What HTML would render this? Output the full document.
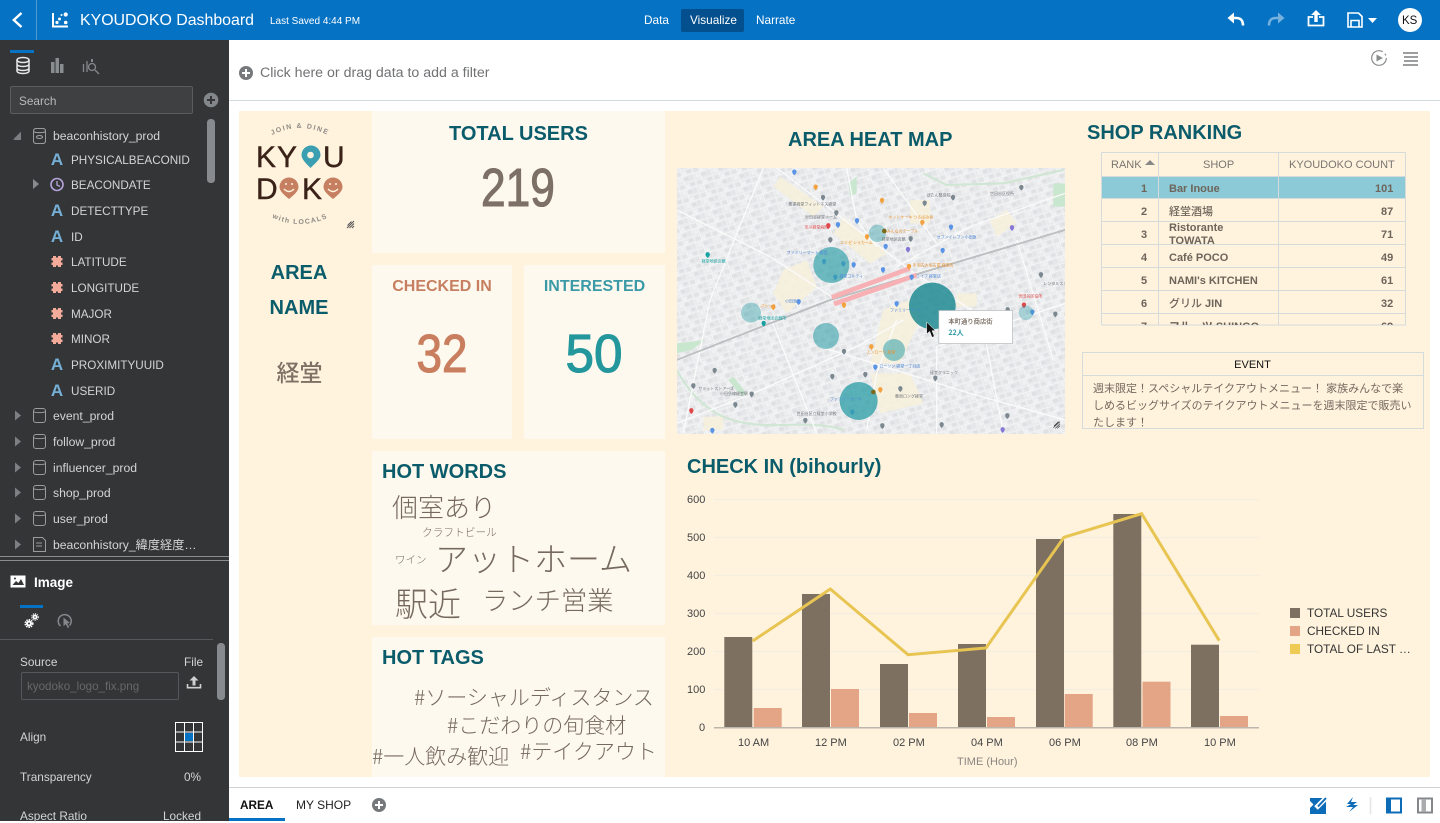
<!DOCTYPE html>
<html lang="ja"><head><meta charset="utf-8"><title>KYOUDOKO Dashboard</title>
<style>
html,body{margin:0;padding:0;width:1440px;height:821px;overflow:hidden;background:#fff;font-family:"Liberation Sans","Noto Sans CJK JP",sans-serif}
.a{position:absolute;white-space:nowrap;line-height:0}
.b{position:absolute}
svg{position:absolute;overflow:visible}
.h{color:#0b5c6b;font-weight:700}
.tree{color:#d3d4d5;font-size:12.200px}
.cap{font-size:11.700px;margin-top:1px}
.lab{color:#d3d4d5;font-size:11.800px;margin-top:.5px}
.w{color:#766a5f;font-family:"Noto Sans CJK JP",sans-serif;font-weight:300}
.p{background:#fef9ef}
.td{color:#6d645a;font-size:11px;font-weight:700;margin-top:.5px}
.jp{font-weight:500}
.th{color:#7a7570;font-size:11px}
.ax{color:#444;font-size:11px}
.leg{color:#333;font-size:11.800px}
.nav{color:#fff;font-size:11.800px;top:20px}
</style></head><body>

<!-- top bar -->
<div class="b" style="left:0;top:0;width:1440px;height:40px;background:#0572c4"></div>
<div class="b" style="left:36px;top:0;width:1px;height:40px;background:#4b9ad6"></div>
<svg style="left:0;top:0" width="1440" height="40" fill="none">
<path d="M21.500 13L13.800 20L21.500 27" stroke="#fff" stroke-width="2.400"/>
<path d="M53 13V26.500H68" stroke="#fff" stroke-width="2"/>
<circle cx="57" cy="22.500" r="1.600" fill="#fff"/><circle cx="59.500" cy="19" r="1.500" fill="#fff"/><circle cx="65.700" cy="14.500" r="2.100" fill="#fff"/><circle cx="65.700" cy="22.500" r="1.800" fill="#fff"/><circle cx="61.500" cy="15" r="1" fill="#fff"/>
<path d="M1233 18h3.500c4 0 6.500 2.500 6.500 7.500" stroke="#fff" stroke-width="2.600"/>
<path d="M1234 12.500l-6.500 5.500 6.500 5.500z" fill="#fff"/>
<g opacity=".45"><path d="M1279 18h-3.500c-4 0-6.500 2.500-6.500 7.500" stroke="#fff" stroke-width="2.600"/><path d="M1278 12.500l6.500 5.500-6.500 5.500z" fill="#fff"/></g>
<path d="M1313 17h-4.500v8.500h15V17H1319" stroke="#fff" stroke-width="1.800"/>
<path d="M1316 10l-5 5h3.300v7h3.400v-7h3.300z" fill="#fff"/>
<path d="M1348 13h10.500l3.500 3.500V27h-14z" stroke="#fff" stroke-width="1.600"/><path d="M1351 27v-6.500h8V27" stroke="#fff" stroke-width="1.600"/>
<path d="M1368 18h9l-4.500 5z" fill="#fff"/>
<circle cx="1410" cy="20" r="12" fill="#fff"/>
</svg>
<div class="a" style="left:80px;top:20.500px;color:#fff;font-size:15.900px">KYOUDOKO Dashboard</div>
<div class="a" style="left:270px;top:21.500px;color:#fff;font-size:10px">Last Saved 4:44 PM</div>
<div class="a nav" style="left:644px">Data</div>
<div class="b" style="left:681px;top:9px;width:63px;height:23px;background:#04508e;border-radius:2px"></div>
<div class="a nav" style="left:690px">Visualize</div>
<div class="a nav" style="left:756px">Narrate</div>
<div class="a" style="left:1402px;top:20.500px;color:#111;font-size:11.500px">KS</div>

<!-- sidebar -->
<div class="b" style="left:0;top:40px;width:229px;height:781px;background:#333537"></div>
<div class="b" style="left:10px;top:50px;width:24px;height:3px;background:#0572c4"></div>
<svg style="left:0;top:40px" width="229" height="781" fill="none">
<defs><path id="hs" d="M-4 -6h3v1.500h2V-6h3v2h1.500v2.500H4v2h1.500V3H4v2h-3V3.500h-2V5h-3V3h-1.500V.5H-4v-2h-1.500V-4H-4z"/></defs>
<g stroke="#e8e8e8" stroke-width="1.500"><ellipse cx="23" cy="20" rx="6" ry="2.500"/><path d="M17 20v11c0 1.500 2.500 2.500 6 2.500s6-1 6-2.500V20M17 24c0 1.500 2.500 2.500 6 2.500s6-1 6-2.500M17 28c0 1.500 2.500 2.500 6 2.500s6-1 6-2.500"/></g>
<path d="M51 22h3.500v11H51zM55.500 18h3.500v15h-3.500zM60 24h3.500v9H60z" fill="#8a8d90"/>
<g stroke="#85888b" stroke-width="1.300"><path d="M83.500 24v8M87 21v11"/><circle cx="92" cy="27" r="3.500"/><path d="M95 30l4 4"/><path d="M92 19v3" stroke-width="2"/></g>
<rect x="10.500" y="46.500" width="182" height="27" rx="1.500" fill="#3e4042" stroke="#5a5c5e"/>
<circle cx="211" cy="60" r="7.300" fill="#84878a"/><path d="M207 60h8M211 56v8" stroke="#333537" stroke-width="2"/>
<rect x="207" y="79" width="8" height="64" rx="3.500" fill="#878b8f"/>
<path d="M13 99.500l8-8v8z" fill="#777a7d"/>
<g stroke="#9a9c9e" stroke-width="1"><rect x="33.500" y="88.500" width="12" height="15" rx="2.500"/><path d="M33.500 91.500c1 1.500 11 1.500 12 0"/><ellipse cx="39.500" cy="97" rx="3" ry="1.500"/></g>
<path d="M33 139l6 5-6 5z" fill="#888b8e"/>
<circle cx="57" cy="144.500" r="6" stroke="#b6a3dc" stroke-width="1.600"/><path d="M57 141v4l3 1.500" stroke="#b6a3dc" stroke-width="1.300"/>
<g fill="#7d8083"><path d="M15 370.500l6 5-6 5zM15 396.500l6 5-6 5zM15 422.500l6 5-6 5zM15 447.500l6 5-6 5zM15 473.500l6 5-6 5zM15 499.500l6 5-6 5z"/></g>
<g stroke="#9a9c9e" stroke-width="1"><rect x="33.500" y="368.500" width="12" height="14" rx="2.500"/><path d="M33.500 371.500c1 1.500 11 1.500 12 0"/><rect x="33.500" y="394.500" width="12" height="14" rx="2.500"/><path d="M33.500 397.500c1 1.500 11 1.500 12 0"/><rect x="33.500" y="420.500" width="12" height="14" rx="2.500"/><path d="M33.500 423.500c1 1.500 11 1.500 12 0"/><rect x="33.500" y="445.500" width="12" height="14" rx="2.500"/><path d="M33.500 448.500c1 1.500 11 1.500 12 0"/><rect x="33.500" y="471.500" width="12" height="14" rx="2.500"/><path d="M33.500 474.500c1 1.500 11 1.500 12 0"/><path d="M33.500 497.500h9l3 3v11h-12zM36 503h6M36 506h6"/></g>
<path d="M0 516.500h229M0 520.500h229" stroke="#8a8c8e"/>
<rect x="10.500" y="535.500" width="15" height="12" fill="#fff"/><path d="M12.500 545l3.500-4 2.500 2 2.500-4 3 6z" fill="#333537"/><circle cx="15" cy="538.500" r="1" fill="#333537"/>
<path d="M20 566.500h23" stroke="#0572c4" stroke-width="3"/>
<g fill="#fff"><circle cx="29" cy="583.500" r="3.800" stroke="#fff" stroke-width="1.500" stroke-dasharray="1.500 1" fill="none"/><circle cx="29" cy="583.500" r="3"/><circle cx="29" cy="583.500" r="1" fill="#333537"/><circle cx="35" cy="577" r="2.500"/><circle cx="35" cy="577" r="3.300" stroke="#fff" stroke-dasharray="1.200 1" fill="none"/><circle cx="35" cy="577" r=".8" fill="#333537"/></g>
<path d="M60.500 586a6.500 6.500 0 1 1 9-.5" stroke="#85888b" stroke-width="1.500"/><path d="M63.500 577.500l6.500 5.500-2.800.4 2 4-1.400.7-2-4-2.300 2z" fill="#85888b"/>
<path d="M0 599.500h213" stroke="#55575a"/>
<rect x="217" y="603" width="8" height="57" rx="3.500" fill="#878b8f"/>
<rect x="21.500" y="632.500" width="157" height="27" rx="1.500" stroke="#55575a"/>
<path d="M187.500 644v3.700h13V644" stroke="#d0d0d0" stroke-width="1.600"/><path d="M194 636l-4.500 4.500h3v5h3v-5h3z" fill="#d0d0d0"/>
<rect x="175.500" y="682.500" width="27" height="29" stroke="#fff"/><path d="M184.500 682.500v29M193.500 682.500v29M175.500 692h27M175.500 702h27" stroke="#fff"/><rect x="185" y="693" width="8" height="8" fill="#0572c4"/>
</svg>
<div class="a" style="left:19px;top:101px;color:#b9babb;font-size:11.800px">Search</div>
<div class="a tree" style="left:53px;top:135.500px">beaconhistory_prod</div>
<svg style="left:0;top:0" width="229" height="420" fill="none">
<path d="M14 140l7-7v7z" fill="#7d8083"/>
<g stroke="#9a9c9e" stroke-width="1"><rect x="33.500" y="128.500" width="12" height="15" rx="2.500"/><path d="M33.500 131.500c1 1.500 11 1.500 12 0"/><ellipse cx="39.500" cy="137" rx="3" ry="1.500"/></g>
<g font-family="Liberation Sans" font-weight="700" font-size="17" fill="#76b0d6" text-anchor="middle">
<text x="57" y="165">A</text><text x="57" y="216">A</text><text x="57" y="242">A</text><text x="57" y="370">A</text><text x="57" y="396">A</text></g>
<g fill="#f4ab9a"><use href="#hs" x="57" y="262"/><use href="#hs" x="57" y="288"/><use href="#hs" x="57" y="314"/><use href="#hs" x="57" y="339"/></g>
</svg>
<div class="a tree cap" style="left:71px;top:159.500px">PHYSICALBEACONID</div>
<div class="a tree cap" style="left:71px;top:185px">BEACONDATE</div>
<div class="a tree cap" style="left:71px;top:211px">DETECTTYPE</div>
<div class="a tree cap" style="left:71px;top:237px">ID</div>
<div class="a tree cap" style="left:71px;top:262px">LATITUDE</div>
<div class="a tree cap" style="left:71px;top:288px">LONGITUDE</div>
<div class="a tree cap" style="left:71px;top:314px">MAJOR</div>
<div class="a tree cap" style="left:71px;top:339px">MINOR</div>
<div class="a tree cap" style="left:71px;top:365px">PROXIMITYUUID</div>
<div class="a tree cap" style="left:71px;top:391px">USERID</div>
<div class="a tree" style="left:53px;top:416px">event_prod</div>
<div class="a tree" style="left:53px;top:442px">follow_prod</div>
<div class="a tree" style="left:53px;top:468px">influencer_prod</div>
<div class="a tree" style="left:53px;top:493px">shop_prod</div>
<div class="a tree" style="left:53px;top:519px">user_prod</div>
<div class="a tree" style="left:53px;top:545px">beaconhistory_緯度経度…</div>
<div class="a" style="left:34px;top:582.500px;color:#fff;font-size:13.500px;font-weight:700">Image</div>
<div class="a lab" style="left:20px;top:661.500px">Source</div>
<div class="a lab" style="left:184px;top:661.500px">File</div>
<div class="a" style="left:27px;top:686.500px;color:#66686a;font-size:11.600px">kyodoko_logo_fix.png</div>
<div class="a lab" style="left:20px;top:736.500px">Align</div>
<div class="a lab" style="left:20px;top:776.500px">Transparency</div>
<div class="a lab" style="left:184px;top:776.500px">0%</div>
<div class="a lab" style="left:20px;top:815.500px">Aspect Ratio</div>
<div class="a lab" style="left:163px;top:815.500px">Locked</div>

<!-- filter bar -->
<div class="b" style="left:229px;top:100px;width:1211px;height:1px;background:#d3dadd"></div>
<svg style="left:229px;top:40px" width="1211" height="60" fill="none">
<circle cx="17" cy="33" r="7" fill="#76797c"/><path d="M13 33h8M17 29v8" stroke="#fff" stroke-width="2"/>
<circle cx="1150" cy="18" r="7.300" stroke="#8a8c8e" stroke-width="1.200" stroke-dasharray="38 3 2 3"/><path d="M1147.500 14.500l6.500 3.500-6.500 3.500z" fill="#8a8c8e"/>
<path d="M1174 13h15M1175 17h14M1175 21h14M1174 25h15" stroke="#7d7f81" stroke-width="1.600"/>
</svg>
<div class="a" style="left:260px;top:73px;color:#707274;font-size:14.200px">Click here or drag data to add a filter</div>

<!-- canvas -->
<div class="b" style="left:239px;top:111px;width:1191px;height:666px;background:#fff3de"></div>
<div class="b p" style="left:372px;top:111px;width:293px;height:142px"></div>
<div class="b p" style="left:372px;top:265px;width:140px;height:174px"></div>
<div class="b p" style="left:524px;top:265px;width:141px;height:174px"></div>
<div class="b p" style="left:372px;top:451px;width:293px;height:174px"></div>
<div class="b p" style="left:372px;top:637px;width:293px;height:140px"></div>

<!-- logo -->
<svg style="left:239px;top:111px" width="133" height="125" fill="none">
<defs>
<path id="arcT" d="M18 34Q61 0 104 34"/>
<path id="arcB" d="M18 98Q61 128 104 98"/>
</defs>
<text font-family="Liberation Sans" font-size="7" fill="#8f8a84" letter-spacing="1.500" font-weight="700" text-anchor="middle"><textPath href="#arcT" startOffset="50%">JOIN &amp; DINE</textPath></text>
<text font-family="Liberation Sans" font-size="7" fill="#8f8a84" letter-spacing="1.200" font-weight="700" text-anchor="middle"><textPath href="#arcB" startOffset="50%">with LOCALS</textPath></text>
<text x="17" y="56" font-family="Liberation Sans" font-size="30" fill="#3a2218" stroke="#3a2218" stroke-width=".4">K</text>
<text x="38" y="56" font-family="Liberation Sans" font-size="30" fill="#3a2218" stroke="#3a2218" stroke-width=".4">Y</text>
<text x="84" y="56" font-family="Liberation Sans" font-size="30" fill="#3a2218" stroke="#3a2218" stroke-width=".4">U</text>
<text x="17" y="88" font-family="Liberation Sans" font-size="30" fill="#3a2218" stroke="#3a2218" stroke-width=".4">D</text>
<text x="63" y="88" font-family="Liberation Sans" font-size="30" fill="#3a2218" stroke="#3a2218" stroke-width=".4">K</text>
<path d="M71 57C66 52 62 48 62 44a9.500 9.500 0 1 1 19 0C81 48 76 52 71 57z" fill="#3a9fb0" transform="translate(.5,0)"/><circle cx="71.500" cy="44" r="3.300" fill="#fff3de"/>
<path d="M50 88C45 84 40.500 80 40.500 76a9.500 9.500 0 1 1 19 0C59.500 80 55 84 50 88z" fill="#c67f60"/>
<path d="M94 88C89 84 84.500 80 84.500 76a9.500 9.500 0 1 1 19 0C103.500 80 99 84 94 88z" fill="#c67f60"/>
<path d="M45 78q5 5 10 0M89 78q5 5 10 0" stroke="#fff3de" stroke-width="1.400"/><circle cx="47" cy="73" r="1" fill="#fff3de"/><circle cx="53" cy="73" r="1" fill="#fff3de"/><circle cx="91" cy="73" r="1" fill="#fff3de"/><circle cx="97" cy="73" r="1" fill="#fff3de"/>
<path d="M108 117l7-7M110.500 117l4.500-4.500M113 117l2-2M108.500 114.500l4-4" stroke="#555" stroke-width="1"/>
</svg>

<div class="a h" style="left:449px;top:133.500px;font-size:20px">TOTAL USERS</div>
<div class="a" style="left:518px;top:188px;color:#7d7066;font-size:54px;transform:translateX(-50%) scaleX(.82);-webkit-text-stroke:1.100px #7d7066">219</div>
<div class="a h" style="left:299px;top:272.500px;font-size:20px;transform:translateX(-50%)">AREA</div>
<div class="a h" style="left:299px;top:307.500px;font-size:20px;transform:translateX(-50%)">NAME</div>
<div class="a" style="left:299.500px;top:372.500px;color:#7d7166;font-size:23px;font-weight:500;transform:translateX(-50%)">経堂</div>
<div class="a" style="left:442px;top:286.500px;color:#c67f60;font-size:16px;font-weight:700;transform:translateX(-50%)">CHECKED IN</div>
<div class="a" style="left:594.500px;top:286.500px;color:#3a9aa8;font-size:16px;font-weight:700;transform:translateX(-50%)">INTERESTED</div>
<div class="a" style="left:442px;top:354px;color:#c97f5f;font-size:54px;transform:translateX(-50%) scaleX(.85);-webkit-text-stroke:1.100px #c97f5f">32</div>
<div class="a" style="left:594px;top:354px;color:#23979c;font-size:54px;transform:translateX(-50%) scaleX(.95);-webkit-text-stroke:1.100px #23979c">50</div>
<div class="a h" style="left:788px;top:139.500px;font-size:20px">AREA HEAT MAP</div>
<div class="a h" style="left:1087px;top:133px;font-size:20px">SHOP RANKING</div>

<!-- map -->
<svg style="left:677px;top:168px;overflow:hidden" width="388" height="266" viewBox="21 24 1164 798" fill="none">
<defs>
<path id="pin" d="M0 9C-4 5-6.500 2-6.500-2a6.500 6.500 0 1 1 13 0C6.500 2 4 5 0 9z"/>
<pattern id="gr" width="54" height="40" patternUnits="userSpaceOnUse" patternTransform="rotate(-17)">
<rect width="54" height="40" fill="#e9eaec"/>
<rect x="5" y="5" width="14" height="10" fill="#e2e3e5"/><rect x="24" y="6" width="10" height="12" fill="#f1f2f3"/><rect x="38" y="4" width="12" height="9" fill="#dfe0e3"/>
<rect x="6" y="22" width="11" height="13" fill="#f0f1f2"/><rect x="22" y="24" width="15" height="10" fill="#dfe0e3"/><rect x="41" y="20" width="9" height="14" fill="#e4e5e7"/>
<path d="M0 0H54M0 0V40M0 19H54M21 0V40" stroke="#fafafa" stroke-width="2"/>
</pattern>
</defs>
<rect x="21" y="24" width="1164" height="798" fill="url(#gr)"/>
<g fill="#f6efdc" opacity=".9"><path d="M330 50l130 90-30 30-120-90zM520 170l130 110-50 30-110-90zM640 450l80-30 30 60-60 130-90 0zM600 640h120l40 90-130 30zM340 330l70-30 30 80-90 80-40-60zM720 120h60v70h-60zM960 180l50-30 30 40-60 40zM100 770h60v40h-60zM860 400h60v40h-60z"/></g>
<g stroke="#cfe6d3" stroke-width="6"><path d="M20 630Q70 720 140 760T340 795T520 810"/><path d="M760 40L830 75L1000 70L1180 30"/></g>
<path d="M1150 70h40v70h-40zM535 70l25-20v50l-20 10zM20 550l85-10-40 30-45 10zM190 650l40 50-15 10-40-50z" fill="#c9e6cf"/>
<g stroke="#fbfbfb" stroke-width="4"><path d="M320 24L720 330L950 480M530 24L560 180L620 260M20 150L300 290L500 420M1185 100L900 200L680 320M640 24L800 250M20 790L250 700L560 560L700 480M450 560L900 700L1185 780M590 810L620 640L680 480M930 450L1000 820M1040 240L1150 600M280 24L120 420M120 420L40 820M300 470L440 820M800 820L800 560L1185 430"/></g>
<path d="M20 600L480 420L1185 210" stroke="#a3a5a8" stroke-width="4.500"/>
<path d="M20 600L480 420L1185 210" stroke="#e2e3e4" stroke-width="1.300"/>
<path d="M485 412L720 325M492 432L740 345" stroke="#f7b0b3" stroke-width="14"/>
<g fill="#5a94e6">
<use href="#pin" x="373" y="37"/><use href="#pin" x="504" y="195"/><use href="#pin" x="561" y="183"/><use href="#pin" x="647" y="260"/><use href="#pin" x="462" y="305"/><use href="#pin" x="520" y="312"/><use href="#pin" x="551" y="315"/><use href="#pin" x="639" y="330"/><use href="#pin" x="496" y="352"/><use href="#pin" x="725" y="352"/><use href="#pin" x="386" y="426"/><use href="#pin" x="680" y="432"/><use href="#pin" x="616" y="622"/><use href="#pin" x="547" y="757"/><use href="#pin" x="127" y="812"/><use href="#pin" x="843" y="202"/><use href="#pin" x="818" y="272"/><use href="#pin" x="1087" y="457"/>
</g>
<g fill="#f3a23f"><use href="#pin" x="437" y="82"/><use href="#pin" x="636" y="122"/><use href="#pin" x="757" y="188"/><use href="#pin" x="591" y="231"/><use href="#pin" x="717" y="320"/><use href="#pin" x="522" y="436"/><use href="#pin" x="310" y="442"/><use href="#pin" x="604" y="561"/><use href="#pin" x="631" y="690"/></g>
<g fill="#7b8890"><use href="#pin" x="459" y="113"/><use href="#pin" x="499" y="159"/><use href="#pin" x="481" y="240"/><use href="#pin" x="722" y="237"/><use href="#pin" x="764" y="130"/><use href="#pin" x="849" y="113"/><use href="#pin" x="1054" y="83"/><use href="#pin" x="1113" y="345"/><use href="#pin" x="1156" y="463"/><use href="#pin" x="1013" y="450"/><use href="#pin" x="522" y="575"/><use href="#pin" x="487" y="650"/><use href="#pin" x="586" y="644"/><use href="#pin" x="796" y="655"/><use href="#pin" x="691" y="687"/><use href="#pin" x="134" y="632"/><use href="#pin" x="70" y="678"/><use href="#pin" x="245" y="703"/><use href="#pin" x="196" y="735"/><use href="#pin" x="406" y="782"/><use href="#pin" x="637" y="798"/><use href="#pin" x="815" y="795"/><use href="#pin" x="1012" y="768"/></g>
<g fill="#8678d4"><use href="#pin" x="1026" y="204"/><use href="#pin" x="714" y="269"/><use href="#pin" x="998" y="810"/></g>
<g fill="#e0484a"><use href="#pin" x="475" y="198"/><use href="#pin" x="1062" y="436"/><use href="#pin" x="64" y="753"/></g>
<g fill="#17a2a2"><use href="#pin" x="113" y="285"/><use href="#pin" x="281" y="491"/></g>
<g fill="#2f9fa8"><circle cx="484" cy="315" r="54" opacity=".68"/><circle cx="622" cy="220" r="26" opacity=".42"/><circle cx="243" cy="458" r="30" opacity=".42"/><circle cx="468" cy="528" r="39" opacity=".58"/><circle cx="672" cy="570" r="33" opacity=".55"/><circle cx="1068" cy="458" r="22" opacity=".38"/><circle cx="566" cy="723" r="57" opacity=".78"/></g>
<circle cx="787" cy="438" r="70" fill="#17868f" opacity=".82"/>
<circle cx="643" cy="213" r="7" fill="#7b6a1e"/><circle cx="610" cy="696" r="7" fill="#7b6a1e"/>
<g font-family="Noto Sans CJK JP" font-size="12">
<g fill="#6d7378"><text x="355" y="137">景達経堂フィットネス経堂</text><text x="405" y="175">世田谷経堂ホーム</text><text x="635" y="242">経堂地区会館</text><text x="770" y="110">ぽたん整骨院</text><text x="960" y="105">世田谷区役所</text><text x="1120" y="375">レンタルスタジオ</text><text x="85" y="690">サミットストアーズ</text><text x="150" y="705">小田急線経堂駅</text><text x="380" y="765">世田谷区立経堂小学校</text><text x="675" y="712">薬局ロング経堂</text><text x="780" y="642">経堂クリニック</text></g>
<g fill="#4a86d8"><text x="350" y="282">ファミリーマート 経堂</text><text x="800" y="235">セブンイレブン小田急</text><text x="508" y="352">経堂コルティ</text><text x="738" y="352">ライフ 経堂店</text><text x="660" y="455">ファミリーマート</text><text x="628" y="622">ローソン 経堂一丁目店</text><text x="480" y="722">ファミリーマート</text><text x="345" y="428">小田急</text></g>
<g fill="#e8912e"><text x="655" y="175">ホットケーキ つるばみ舎</text><text x="650" y="217">みんなのテーブル</text><text x="510" y="252">エリゼ シラカーム</text><text x="728" y="320">手羽先大名古屋 経堂店</text><text x="590" y="580">エンロード 経堂</text><text x="270" y="441">ぷらっと</text></g>
<g fill="#e0484a"><text x="403" y="205">市川経堂病院</text><text x="1045" y="412">世田谷区役所</text></g>
<g fill="#17a2a2"><text x="95" y="308">経堂地区会館</text><text x="265" y="478">経堂地区会館所</text></g>
</g>
<path d="M1150 803l20-18M1156 805l14-14M1162 805l8-8M1152 798l14-13" stroke="#333" stroke-width="2"/>
<rect x="806.500" y="451.500" width="221" height="99" fill="#fff" stroke="#b4b8ba" stroke-width="2"/>
<text x="835" y="491" font-family="Noto Sans CJK JP" font-size="19" font-weight="500" fill="#6f6357">本町通り商店街</text>
<text x="835" y="525" font-family="Noto Sans CJK JP" font-size="21" font-weight="700" fill="#2b98a5">22人</text>
<path d="M770 486V522L779 514L786 532L793 529L786 512H796z" fill="#111" stroke="#fff" stroke-width="1.500"/>
</svg>

<!-- table -->
<svg style="left:1080px;top:145px" width="350" height="290" fill="none">
<rect x="22" y="32" width="304" height="21.500" fill="#8bcad6"/>
<g stroke="#d5dadb" stroke-width="1">
<path d="M21.500 7.500h304M21.500 180h304M21.500 7.500V180M325.500 7.500V180M78.500 7.500V180M198.500 7.500V180M21.500 53.500h304M21.500 76.500h304M21.500 99.500h304M21.500 122.500h304M21.500 145.500h304M21.500 168.500h304M21.500 31.500h304"/>
<rect x="2.500" y="207.500" width="341" height="76"/><path d="M2.500 230.500h341"/>
</g>
<path d="M65 20l5-5 5 5z" fill="#888"/>
</svg>
<div class="a th" style="left:1111px;top:164.500px">RANK</div>
<div class="a th" style="left:1203px;top:164.500px">SHOP</div>
<div class="a th" style="left:1289px;top:164.500px">KYOUDOKO COUNT</div>
<div class="b" style="left:1102px;top:314px;width:303px;height:10.500px;overflow:hidden;z-index:2"><div class="a td" style="left:67px;top:12.500px">フルーツ SHINGO</div><div class="a td" style="left:39px;top:12.500px">7</div><div class="a td" style="left:279px;top:12.500px">69</div></div>
<div class="a td" style="left:1141px;top:188px">1</div><div class="a td" style="left:1169px;top:188px">Bar Inoue</div><div class="a td" style="left:1375px;top:188px">101</div>
<div class="a td" style="left:1141px;top:211px">2</div><div class="a td jp" style="left:1169px;top:211px">経堂酒場</div><div class="a td" style="left:1381px;top:211px">87</div>
<div class="a td" style="left:1141px;top:234px">3</div><div class="a td" style="left:1169px;top:227.500px">Ristorante</div><div class="a td" style="left:1169px;top:240.500px">TOWATA</div><div class="a td" style="left:1381px;top:234px">71</div>
<div class="a td" style="left:1141px;top:257px">4</div><div class="a td" style="left:1169px;top:257px">Café POCO</div><div class="a td" style="left:1381px;top:257px">49</div>
<div class="a td" style="left:1141px;top:280px">5</div><div class="a td" style="left:1169px;top:280px">NAMI's KITCHEN</div><div class="a td" style="left:1381px;top:280px">61</div>
<div class="a td" style="left:1141px;top:303px">6</div><div class="a td" style="left:1169px;top:303px"><span class="jp">グリル</span> JIN</div><div class="a td" style="left:1381px;top:303px">32</div>
<div class="a" style="left:1252.500px;top:364.500px;color:#111;font-size:11px;transform:translateX(-50%)">EVENT</div>
<div class="a" style="left:1093px;top:388.500px;color:#73695e;font-size:11px">週末限定！スペシャルテイクアウトメニュー！ 家族みんなで楽</div>
<div class="a" style="left:1093px;top:405.500px;color:#73695e;font-size:11px">しめるビッグサイズのテイクアウトメニューを週末限定で販売い</div>
<div class="a" style="left:1093px;top:422.500px;color:#73695e;font-size:11px">たします！</div>

<!-- words -->
<div class="a h" style="left:382px;top:471.500px;font-size:20px">HOT WORDS</div>
<div class="a w" style="left:392px;top:507px;font-size:26px">個室あり</div>
<div class="a w" style="left:422px;top:532.500px;font-size:10.700px">クラフトビール</div>
<div class="a w" style="left:395px;top:560px;font-size:10.500px">ワイン</div>
<div class="a w" style="left:435px;top:557px;font-size:33px">アットホーム</div>
<div class="a w" style="left:395px;top:602px;font-size:33px">駅近</div>
<div class="a w" style="left:482px;top:599px;font-size:26.300px">ランチ営業</div>
<div class="a h" style="left:382px;top:657.500px;font-size:20px">HOT TAGS</div>
<div class="a w" style="left:414px;top:697px;font-size:21px">#ソーシャルディスタンス</div>
<div class="a w" style="left:447px;top:725px;font-size:21px">#こだわりの旬食材</div>
<div class="a w" style="left:372px;top:756px;font-size:21px">#一人飲み歓迎</div>
<div class="a w" style="left:520px;top:751px;font-size:21px">#テイクアウト</div>

<!-- chart -->
<div class="a h" style="left:687px;top:466.500px;font-size:20px">CHECK IN (bihourly)</div>
<svg style="left:0;top:0" width="1440" height="821" fill="none">
<path d="M714 499.500H1259M714 537.500H1259M714 575.500H1259M714 613.500H1259M714 651.500H1259M714 689.500H1259" stroke="#f5ede0" stroke-width="1.500"/>
<g fill="#7d7061"><rect x="724.300" y="637" width="28" height="91"/><rect x="802" y="594" width="28" height="134"/><rect x="880" y="664" width="28" height="64"/><rect x="958" y="644" width="28" height="84"/><rect x="1036" y="539" width="28" height="189"/><rect x="1113.300" y="514" width="28" height="214"/><rect x="1191" y="644.700" width="28" height="83"/></g>
<g fill="#e3a586"><rect x="753.700" y="708" width="28" height="20"/><rect x="831" y="689" width="28" height="39"/><rect x="909" y="713" width="28" height="15"/><rect x="987" y="717" width="28" height="11"/><rect x="1064.700" y="694" width="28" height="34"/><rect x="1142.500" y="681.700" width="28" height="46"/><rect x="1220" y="716" width="28" height="12"/></g>
<path d="M714 727.700H1259" stroke="#bcb6ac" stroke-width="1.500"/>
<path d="M752.700 641L830.300 589L908 654.700L986 648L1064 537.300L1141.700 513.700L1219.300 640.700" stroke="#e8c552" stroke-width="3"/>
<rect x="1290" y="608" width="10" height="10" fill="#7d7061"/><rect x="1290" y="626" width="10" height="10" fill="#e3a586"/><rect x="1290" y="644" width="10" height="10" fill="#efca54"/>
</svg>
<div class="a ax" style="left:687px;top:499.500px">600</div><div class="a ax" style="left:687px;top:537.500px">500</div><div class="a ax" style="left:687px;top:575.500px">400</div><div class="a ax" style="left:687px;top:613.500px">300</div><div class="a ax" style="left:687px;top:651.500px">200</div><div class="a ax" style="left:687px;top:689.500px">100</div><div class="a ax" style="left:699px;top:727.500px">0</div>
<div class="a ax" style="left:738px;top:743px">10 AM</div><div class="a ax" style="left:815px;top:743px">12 PM</div><div class="a ax" style="left:893px;top:743px">02 PM</div><div class="a ax" style="left:971px;top:743px">04 PM</div><div class="a ax" style="left:1049px;top:743px">06 PM</div><div class="a ax" style="left:1126px;top:743px">08 PM</div><div class="a ax" style="left:1204px;top:743px">10 PM</div>
<div class="a" style="left:957px;top:762px;color:#8a8580;font-size:11px">TIME (Hour)</div>
<div class="a leg" style="left:1307px;top:613px">TOTAL USERS</div>
<div class="a leg" style="left:1307px;top:631px">CHECKED IN</div>
<div class="a leg" style="left:1307px;top:649px">TOTAL OF LAST …</div>

<!-- tab bar -->
<div class="b" style="left:229px;top:787px;width:1211px;height:1px;background:#d0d3d5"></div>
<div class="b" style="left:229px;top:818px;width:56px;height:3px;background:#0572c4"></div>
<div class="a" style="left:240px;top:805px;color:#111;font-size:11.800px;font-weight:700">AREA</div>
<div class="a" style="left:296px;top:805px;color:#222;font-size:12px">MY SHOP</div>
<svg style="left:229px;top:787px" width="1211" height="34" fill="none">
<circle cx="150" cy="18" r="7" fill="#76797c"/><path d="M146 18h8M150 14v8" stroke="#fff" stroke-width="2"/>
<rect x="1081" y="11" width="16" height="16" fill="#0d6cb8"/>
<path d="M1098 10L1087 21" stroke="#fff" stroke-width="5"/><path d="M1097 11L1089 19.500" stroke="#0d6cb8" stroke-width="2"/><path d="M1081 14l3.500 3.500L1081 21z" fill="#fff"/>
<path d="M1125 11l-6 7h4l-5 3h7l-4 5 9-7h-5l4-3h-6z" fill="#0d6cb8" transform="translate(-1,-1)"/>
<path d="M1141.500 10v17" stroke="#e4e5e6" stroke-width="1.500"/>
<rect x="1158" y="11.500" width="14" height="14" stroke="#0d6cb8" stroke-width="2"/><rect x="1157" y="10.500" width="5" height="16" fill="#0d6cb8"/>
<rect x="1189" y="11.500" width="14" height="14" stroke="#85878a" stroke-width="2"/><rect x="1192.500" y="12" width="4.500" height="13" fill="#a9abad"/>
</svg>
</body></html>
